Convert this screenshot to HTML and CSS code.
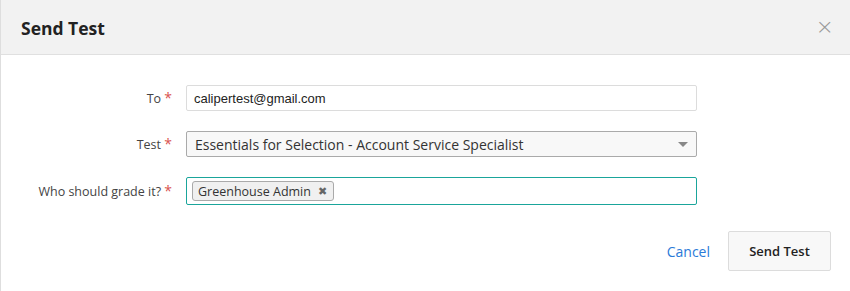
FILE: index.html
```html
<!DOCTYPE html>
<html lang="en">
<head>
  <meta charset="UTF-8" />
  <title>Send Test</title>
  <link rel="stylesheet" href="styles.css">
</head>
<body>
  <div class="modal">
    <div class="modal-header">
      <h2>Send Test</h2>
      <span class="close">&times;</span>
    </div>

    <div class="modal-body">
      <div class="row">
        <label>To <span class="req">*</span></label>
        <div class="field text-input">calipertest@gmail.com</div>
      </div>
      <div class="row">
        <label>Test <span class="req">*</span></label>
        <div class="field select">
          <span>Essentials for Selection - Account Service Specialist</span>
          <span class="caret"></span>
        </div>
      </div>
      <div class="row">
        <label>Who should grade it? <span class="req">*</span></label>
        <div class="field tags">
          <span class="tag">Greenhouse Admin <b>&#x2716;</b></span>
        </div>
      </div>
    </div>

    <div class="modal-footer">
      <a class="cancel" href="#">Cancel</a>
      <button class="send-button">Send Test</button>
    </div>
  </div>
</body>
</html>
```

FILE: styles.css
```css
body {
  margin: 0;
  font-family: 'Open Sans', sans-serif;
  background: white;
  color: #333;
}
.modal {
  width: 849px;
  height: 291px;
  border-left: 1px solid #dedede;
  background: white;
}
.modal-header {
  height: 55px;
  background: #f2f2f2;
  border-bottom: 1px solid #e0e0e0;
  display: flex;
  align-items: center;
  justify-content: space-between;
  padding: 0 16px 0 20px;
  box-sizing: border-box;
}
.modal-header h2 {
  margin: 0;
  font-size: 17.5px;
  font-weight: 700;
  color: #222;
  padding-top: 2px;
}
.close {
  font-family: 'DejaVu Sans', sans-serif;
  font-weight: 200;
  font-size: 22px;
  color: #999;
  line-height: 1;
  margin-top: -1px;
}
.modal-body {
  padding-top: 30px;
  display: flex;
  flex-direction: column;
  gap: 20px;
}
.row {
  display: flex;
  align-items: center;
  height: 26px;
}
.row:last-child {
  height: 28px;
}
.row label {
  width: 171px;
  text-align: right;
  font-size: 12.5px;
  color: #444;
  margin-right: 14px;
  padding-bottom: 1px;
}
.req {
  color: #d9534f;
  font-size: 14px;
}
.field {
  width: 511px;
  height: 100%;
  box-sizing: border-box;
  display: flex;
  align-items: center;
}
.text-input {
  border: 1px solid #dcdcdc;
  border-radius: 2px;
  padding-left: 7px;
  font-family: 'Liberation Sans', Arial, sans-serif;
  font-size: 13px;
  color: #222;
}
.select {
  border: 1px solid #aaa;
  border-radius: 2px;
  background: #f8f8f8;
  padding: 0 8px 0 8px;
  font-size: 14px;
  color: #333;
  justify-content: space-between;
}
.caret {
  width: 0;
  height: 0;
  border-left: 5px solid transparent;
  border-right: 5px solid transparent;
  border-top: 5px solid #888;
  margin-top: 1px;
}
.tags {
  border: 1px solid #1aa59b;
  border-radius: 2px;
  padding-left: 5px;
}
.tag {
  display: inline-flex;
  align-items: center;
  height: 20px;
  box-sizing: border-box;
  border: 1px solid #aaa;
  border-radius: 3px;
  background: #f0f0f0;
  padding: 0 6px 0 5px;
  font-size: 12.5px;
  color: #333;
}
.tag b {
  font-family: 'DejaVu Sans', sans-serif;
  font-size: 11px;
  color: #666;
  margin-left: 7px;
}
.modal-footer {
  display: flex;
  justify-content: flex-end;
  align-items: center;
  gap: 18px;
  padding: 26px 19px 0 0;
}
.cancel {
  color: #2a7ad8;
  text-decoration: none;
  font-size: 14px;
}
.send-button {
  width: 103px;
  height: 40px;
  border: 1px solid #dcdcdc;
  border-radius: 2px;
  background: #f8f8f8;
  font-family: 'Open Sans', sans-serif;
  font-size: 13px;
  font-weight: 600;
  color: #222;
}
```
